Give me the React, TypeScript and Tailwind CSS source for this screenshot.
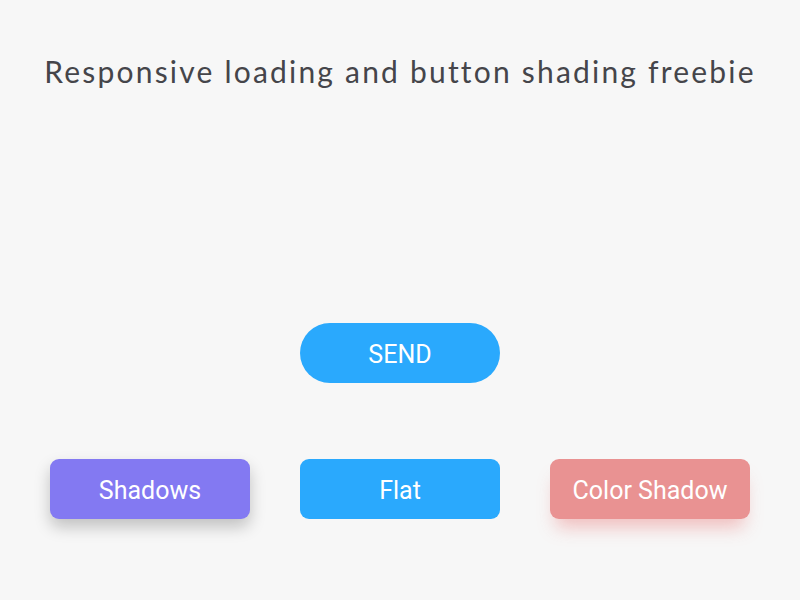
import React from 'react';

const btn =
  "w-[200px] h-[60px] pt-[3px] flex items-center justify-center text-white text-[25px] font-['Roboto',sans-serif]";

export default function App() {
  return (
    <div className="w-[800px] h-[600px] bg-[#f7f7f7] flex flex-col items-center overflow-hidden">
      <h1 className="mt-[51px] h-[40px] leading-[40px] text-[30px] tracking-[2.2px] text-[#45454a] font-['Lato',sans-serif]">
        Responsive loading and button shading freebie
      </h1>

      {/* pill button */}
      <button className={`${btn} mt-[232px] rounded-full bg-[#2aa9fd]`}>SEND</button>

      <div className="mt-[76px] w-full px-[50px] flex justify-between">
        <button className={`${btn} rounded-[9px] bg-[#8379f2] shadow-[0_8px_16px_rgba(0,0,0,0.22)]`}>
          Shadows
        </button>
        <button className={`${btn} rounded-[9px] bg-[#2aa9fd]`}>Flat</button>
        <button className={`${btn} rounded-[9px] bg-[#e99292] shadow-[0_14px_18px_-6px_rgba(233,120,120,0.45)]`}>
          Color Shadow
        </button>
      </div>
    </div>
  );
}
